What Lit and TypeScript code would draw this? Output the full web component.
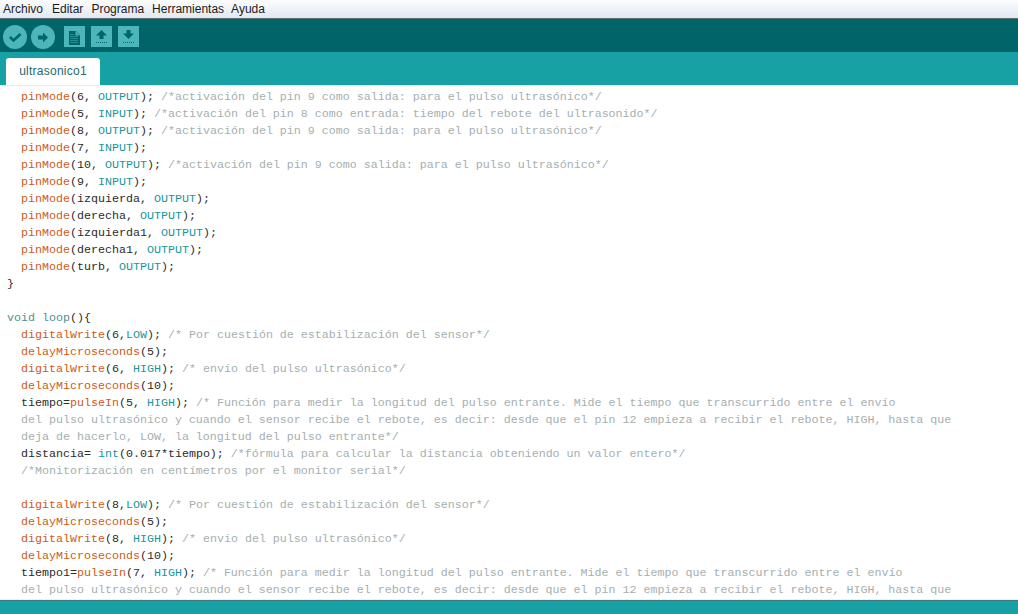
import { LitElement, html, css } from "lit";
import { customElement } from "lit/decorators.js";

const O = (s: string) => html`<span class="o">${s}</span>`;
const T = (s: string) => html`<span class="t">${s}</span>`;
const K = (s: string) => html`<span class="k">${s}</span>`;
const C = (s: string) => html`<span class="c">${s}</span>`;
const pm = (a: string, k: string, c = "") => html`  ${O("pinMode")}(${a}, ${T(k)});${c ? html` ${C(c)}` : ""}`;
const dw = (n: string, v: string, c: string, sp = "") => html`  ${O("digitalWrite")}(${n},${sp}${T(v)});${html` ${C(c)}`}`;
const dm = (n: string) => html`  ${O("delayMicroseconds")}(${n});`;

const lines = [
  pm("6", "OUTPUT", "/*activación del pin 9 como salida: para el pulso ultrasónico*/"),
  pm("5", "INPUT", "/*activación del pin 8 como entrada: tiempo del rebote del ultrasonido*/"),
  pm("8", "OUTPUT", "/*activación del pin 9 como salida: para el pulso ultrasónico*/"),
  pm("7", "INPUT"),
  pm("10", "OUTPUT", "/*activación del pin 9 como salida: para el pulso ultrasónico*/"),
  pm("9", "INPUT"),
  pm("izquierda", "OUTPUT"),
  pm("derecha", "OUTPUT"),
  pm("izquierda1", "OUTPUT"),
  pm("derecha1", "OUTPUT"),
  pm("turb", "OUTPUT"),
  html`}`,
  html``,
  html`${K("void")} ${K("loop")}(){`,
  dw("6", "LOW", "/* Por cuestión de estabilización del sensor*/"),
  dm("5"),
  dw("6", "HIGH", "/* envío del pulso ultrasónico*/", " "),
  dm("10"),
  html`  tiempo=${O("pulseIn")}(5, ${T("HIGH")}); ${C("/* Función para medir la longitud del pulso entrante. Mide el tiempo que transcurrido entre el envío")}`,
  html`  ${C("del pulso ultrasónico y cuando el sensor recibe el rebote, es decir: desde que el pin 12 empieza a recibir el rebote, HIGH, hasta que")}`,
  html`  ${C("deja de hacerlo, LOW, la longitud del pulso entrante*/")}`,
  html`  distancia= ${T("int")}(0.017*tiempo); ${C("/*fórmula para calcular la distancia obteniendo un valor entero*/")}`,
  html`  ${C("/*Monitorización en centímetros por el monitor serial*/")}`,
  html``,
  dw("8", "LOW", "/* Por cuestión de estabilización del sensor*/"),
  dm("5"),
  dw("8", "HIGH", "/* envío del pulso ultrasónico*/", " "),
  dm("10"),
  html`  tiempo1=${O("pulseIn")}(7, ${T("HIGH")}); ${C("/* Función para medir la longitud del pulso entrante. Mide el tiempo que transcurrido entre el envío")}`,
  html`  ${C("del pulso ultrasónico y cuando el sensor recibe el rebote, es decir: desde que el pin 12 empieza a recibir el rebote, HIGH, hasta que")}`,
];

@customElement("app-root")
export class AppRoot extends LitElement {
  static styles = css`
    :host { display: flex; flex-direction: column; width: 1018px; height: 614px; overflow: hidden; background: #fff; font-family: "Liberation Sans", Arial, sans-serif; }
    .menu { height: 18px; flex: none; display: flex; gap: 8px; padding-left: 3px; align-items: center; font-size: 12px; color: #1c1c1c; background: linear-gradient(#fdfdfe, #e1e8f1); border-bottom: 1px solid #5f6f70; }
    .menu span:first-child { margin-right: 1px; }
    .menu span:nth-child(4) { margin-right: -1px; }
    .toolbar { box-sizing: border-box; height: 33px; padding: 2px 0 0 3px; flex: none; background: #006468; display: flex; align-items: center; }
    .round { width: 24px; height: 24px; border-radius: 50%; background: #4db6bb; display: block; margin-right: 4px; }
    .sq { width: 21px; height: 21px; background: #4db6bb; display: block; margin-right: 6px; }
    .gap { width: 5px; }
    .tabs { height: 33px; flex: none; background: #17a1a5; display: flex; align-items: flex-end; padding-left: 6px; }
    .tab { width: 94px; height: 27px; background: #fff; border-radius: 3px 3px 0 0; font-size: 12px; line-height: 26px; color: #256a6e; text-align: center; letter-spacing: 0.25px; }
    .editor { flex: 1; min-height: 0; overflow: hidden; padding: 3px 0 0 7px; font-family: "Liberation Mono", "Courier New", monospace; font-size: 11.67px; line-height: 17px; color: #2b2b2b; white-space: pre; border-top: 1px solid #dcf1f2; border-bottom: 1px solid #eef0f0; }
    .line { height: 17px; }
    .o { color: #cf5a17; }
    .t { color: #17969b; }
    .k { color: #4f9194; }
    .c { color: #a4b0b1; }
    .status { height: 13px; flex: none; background: #17a1a5; border-top: 1px solid #3c7a7d; }
    .ink { fill: #006468; }
    .lite { fill: #4db6bb; }
    .dots { stroke: #006468; stroke-width: 1; stroke-dasharray: 1 1; fill: none; }
    .tick { fill: none; stroke: #006468; stroke-width: 2.6; }
    .grid { stroke: #4db6bb; stroke-width: 1; stroke-dasharray: 1 1; fill: none; }
  `;

  render() {
    return html`
      <div class="menu"><span>Archivo</span><span>Editar</span><span>Programa</span><span>Herramientas</span><span>Ayuda</span></div>
      <div class="toolbar">
        <svg class="round" viewBox="0 0 24 24"><path class="tick" d="M7 12l3.500 3.500L17.500 9"/></svg>
        <svg class="round" viewBox="0 0 24 24"><path class="ink" d="M7 10.500h5V7.500l5 5-5 5v-3H7z"/></svg>
        <span class="gap"></span>
        <svg class="sq" viewBox="0 0 21 21"><path class="ink" d="M5 5h7l4 4.500V19H5z"/><path class="lite" d="M11.500 5.500h.5l3.500 4h-4z"/><path class="grid" d="M6.500 8.500h4M6.500 10.500h8M6.500 12.500h8M6.500 14.500h8M6.500 16.500h8"/></svg>
        <svg class="sq" viewBox="0 0 21 21"><path class="ink" d="M10.500 4L16 9.500h-3.500V13h-4V9.500H5z"/><path class="dots" d="M5 16.500h11"/></svg>
        <svg class="sq" viewBox="0 0 21 21"><path class="ink" d="M10.500 13L16 7.500h-3.500V4h-4v3.500H5z"/><path class="dots" d="M5 16.500h11"/></svg>
      </div>
      <div class="tabs"><div class="tab">ultrasonico1</div></div>
      <div class="editor">${lines.map((l) => html`<div class="line">${l}</div>`)}</div>
      <div class="status"></div>
    `;
  }
}
